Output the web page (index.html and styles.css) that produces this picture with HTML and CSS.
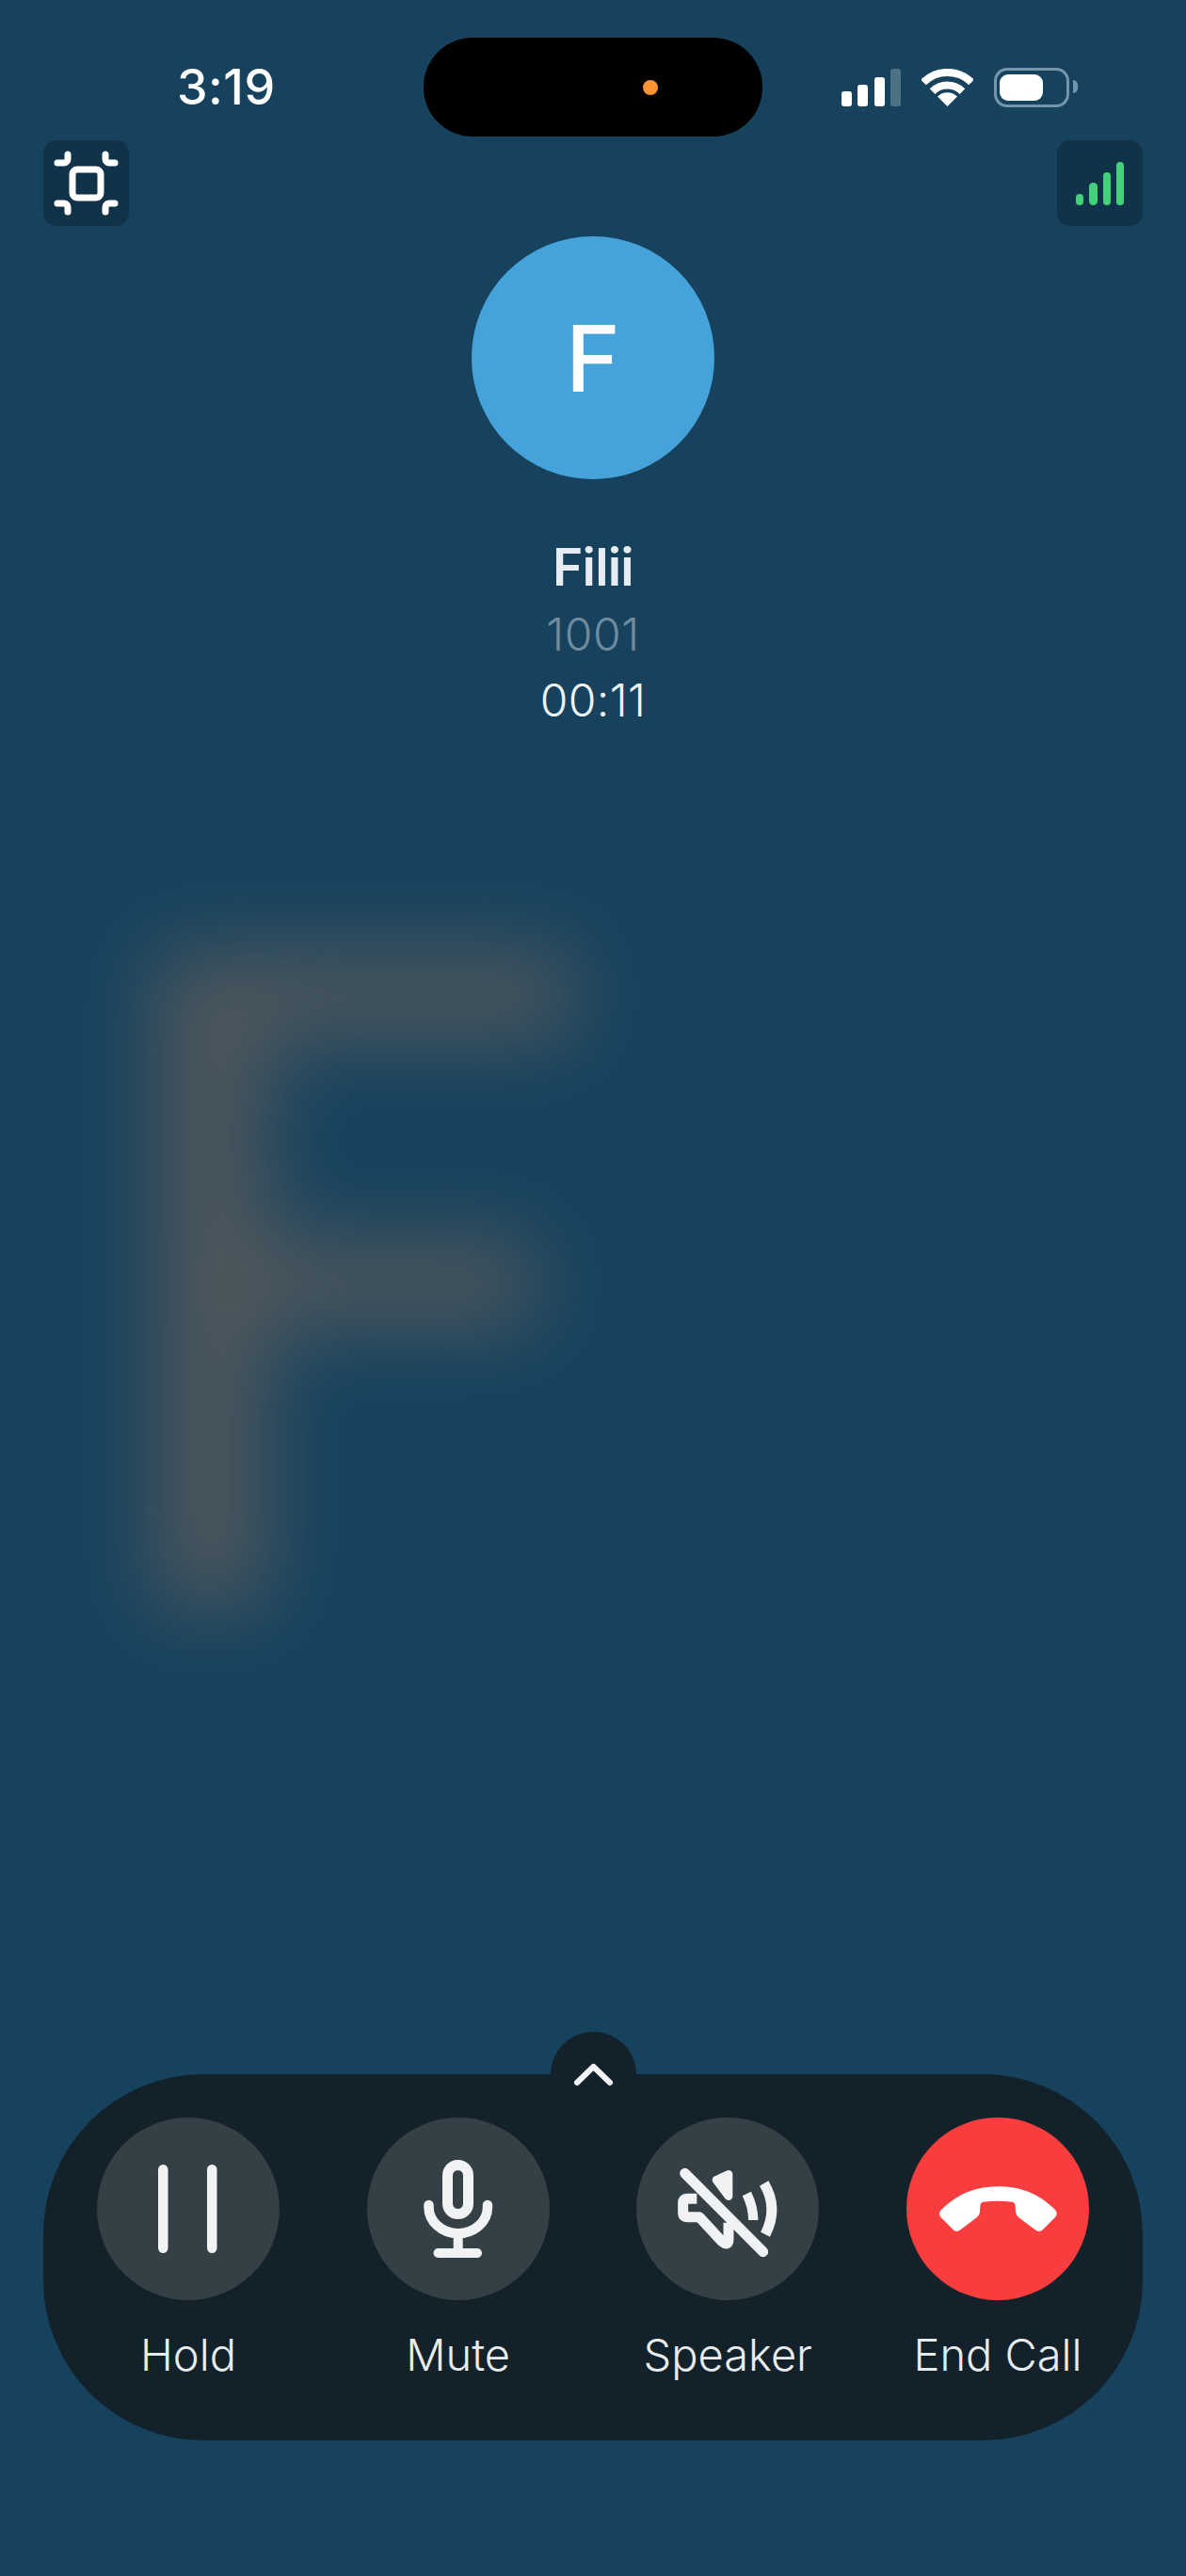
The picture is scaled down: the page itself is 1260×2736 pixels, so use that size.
FILE: index.html
```html
<!DOCTYPE html>
<html lang="en">
<head>
	<meta charset="UTF-8">
	<title>Call</title>
	<link rel="stylesheet" href="styles.css">
</head>
<body>
<div class="screen">
	<div class="bg-letter">F</div>

	<div class="status">
		<div class="time">3:19</div>
		<div class="island"><span class="island-dot"></span></div>
		<div class="status-icons">
			<div class="cell">
				<span class="cell-bar b1"></span>
				<span class="cell-bar b2"></span>
				<span class="cell-bar b3"></span>
				<span class="cell-bar b4"></span>
			</div>
			<svg class="wifi" width="55" height="40" viewBox="0 0 55 40" fill="none" stroke="#fff">
				<path stroke-width="8" d="M2 14.5A36 36 0 0 1 53 14.5"/>
				<path stroke-width="8" d="M11.600 24.100A22.500 22.500 0 0 1 43.400 24.100"/>
				<path fill="#fff" stroke="none" d="M27.500 40L17 29.500A14.800 14.800 0 0 1 38 29.500Z"/>
			</svg>
			<div class="battery"><span class="battery-fill"></span></div>
			<span class="battery-nub"></span>
		</div>
	</div>

	<div class="toolbar">
		<div class="tool">
			<svg width="91" height="91" viewBox="0 0 91 91" fill="none" stroke="#fff" stroke-width="7" stroke-linecap="round">
				<rect x="31" y="31" width="30" height="30" rx="5"/>
				<path d="M26 15V20a4 4 0 0 1-4 4H15"/>
				<path d="M66 15V20a4 4 0 0 0 4 4H76"/>
				<path d="M15 67H22a4 4 0 0 1 4 4V76"/>
				<path d="M76 67H70a4 4 0 0 0-4 4V76"/>
			</svg>
		</div>
		<div class="tool tool-signal">
			<span class="sig s1"></span>
			<span class="sig s2"></span>
			<span class="sig s3"></span>
			<span class="sig s4"></span>
		</div>
	</div>

	<div class="caller">
		<div class="avatar">F</div>
		<div class="name">Filii</div>
		<div class="number">1001</div>
		<div class="timer">00:11</div>
	</div>

	<div class="panel">
		<div class="more">
			<svg width="91" height="91" viewBox="0 0 91 91" fill="none" stroke="#f2f4f6" stroke-width="6" stroke-linecap="round" stroke-linejoin="round">
				<path d="M28 54L45.500 37L63 54"/>
			</svg>
		</div>
		<div class="action">
			<div class="round">
				<svg width="194" height="194" viewBox="0 0 194 194" fill="#f0f2f4">
					<rect x="65" y="50" width="10.500" height="94" rx="5.200"/>
					<rect x="117" y="50" width="10.500" height="94" rx="5.200"/>
				</svg>
			</div>
			<div class="label">Hold</div>
		</div>
		<div class="action">
			<div class="round">
				<svg width="194" height="194" viewBox="0 0 194 194" fill="none" stroke="#f0f2f4" stroke-linecap="round">
					<rect x="85.500" y="50.500" width="22" height="52" rx="11" stroke-width="11"/>
					<path stroke-width="10.500" d="M65.500 93v2a31 28 0 0 0 62.500 0v-2"/>
					<path stroke-width="10" stroke-linecap="butt" d="M96.700 123V144"/>
					<path stroke-width="10" d="M75.500 144H117"/>
				</svg>
			</div>
			<div class="label">Mute</div>
		</div>
		<div class="action">
			<div class="round">
				<svg width="194" height="194" viewBox="51 27 582 582" fill="none" stroke="#f0f2f4" stroke-width="33" stroke-linejoin="round">
					<path d="M244 286H212Q200 286 200 298V332Q200 344 212 344H252L322 420Q345 440 345 414V362"/>
					<path stroke-width="26" fill="#f0f2f4" d="M306 226L345 208V278Z"/>
					<path stroke-linecap="round" d="M206 205L455 455"/>
					<path stroke-width="31" d="M403 270Q423 310 424 354"/>
					<path stroke-width="33" d="M458 237C490 290 490 345 462 400"/>
				</svg>
			</div>
			<div class="label">Speaker</div>
		</div>
		<div class="action">
			<div class="round round-end">
				<svg width="194" height="194" viewBox="0 0 194 194" fill="#fff">
					<path d="M37 98C55 80 75 73.300 97.500 73.300C120 73.300 140 80 158 98Q161.500 102 158 106L145 119Q141.500 122.500 137 119.500L119 106Q116 103.500 116 100L115.500 93Q115 90 112 89.800Q97 87.500 82 89.800Q79 90 78.500 93L78 100Q78 103.500 75 106L57 119.500Q53 122.500 49.500 119L36.500 106Q33 102 37 98Z"/>
				</svg>
			</div>
			<div class="label">End Call</div>
		</div>
	</div>
</div>
</body>
</html>
```

FILE: styles.css
```css
html,body{
	margin: 0;
	padding: 0;
	background-color: #16425e;
}
.screen{
	position: relative;
	display: flex;
	flex-direction: column;
	width: 1260px;
	height: 2736px;
	overflow: hidden;
	background-color: #16425e;
	font-family: Inter, "Liberation Sans", sans-serif;
	color: #fff;
}
.bg-letter{
	position: absolute;
	top: 880px;
	left: 92px;
	font-family: Roboto, sans-serif;
	font-size: 985px;
	font-weight: 500;
	line-height: 1;
	color: #967259;
	opacity: .45;
	filter: blur(46px);
}

/* status bar */
.status{
	position: relative;
	display: grid;
	grid-template-columns: 450px 360px 450px;
	height: 105px;
	margin-top: 40px;
}
.time{
	align-self: center;
	padding-left: 188px;
	font-size: 52px;
	font-weight: 500;
	line-height: 60px;
	letter-spacing: .5px;
}
.island{
	display: flex;
	align-items: center;
	justify-content: flex-end;
	padding-right: 111px;
	background-color: #000;
	border-radius: 52px;
}
.island-dot{
	width: 16px;
	height: 16px;
	margin-top: 1px;
	background-color: #ff9430;
	border-radius: 50%;
}
.status-icons{
	display: flex;
	align-items: flex-end;
	height: 73px;
	padding-left: 84px;
}
.cell{
	display: flex;
	align-items: flex-end;
	gap: 6.300px;
	margin-right: 22px;
}
.cell-bar{
	width: 11px;
	background-color: #fff;
	border-radius: 3px;
}
.b1{height: 16px;}
.b2{height: 23px;}
.b3{height: 31px;}
.b4{height: 40px; background-color: #4f7186;}
.wifi{
	margin-right: 22px;
}
.battery{
	box-sizing: border-box;
	width: 80px;
	height: 42px;
	margin-bottom: -1px;
	padding: 4px 3px;
	border: 3px solid #7496ac;
	border-radius: 14px;
}
.battery-fill{
	display: block;
	width: 46px;
	height: 28px;
	background-color: #fff;
	border-radius: 9px;
}
.battery-nub{
	width: 5px;
	height: 14px;
	margin: 0 0 14px 4px;
	background-color: #7496ac;
	border-radius: 0 5px 5px 0;
}

/* corner tools */
.toolbar{
	display: flex;
	justify-content: space-between;
	margin-top: 4px;
	padding: 0 46px;
}
.tool{
	width: 91px;
	height: 91px;
	background-color: #113349;
	border-radius: 14px;
}
.tool-signal{
	display: flex;
	align-items: flex-end;
	box-sizing: border-box;
	gap: 6px;
	padding: 0 20px 22px;
}
.sig{
	width: 8.500px;
	background-color: #43d27a;
	border-radius: 5px;
}
.s1{height: 12px;}
.s2{height: 24px;}
.s3{height: 35px;}
.s4{height: 46px;}

/* caller */
.caller{
	position: relative;
	display: flex;
	flex-direction: column;
	align-items: center;
	margin-top: 11px;
}
.avatar{
	display: flex;
	align-items: center;
	justify-content: center;
	width: 258px;
	height: 258px;
	font-size: 98px;
	font-weight: 500;
	background-color: #45a3da;
	border-radius: 50%;
}
.name{
	margin-top: 60px;
	font-size: 55px;
	font-weight: 600;
	line-height: 66px;
	letter-spacing: -.8px;
	color: #e6ecf1;
}
.number{
	margin-top: 8px;
	font-size: 48px;
	font-weight: 300;
	line-height: 62px;
	letter-spacing: .6px;
	color: #6f8ba0;
}
.timer{
	margin-top: 8px;
	font-size: 48px;
	font-weight: 300;
	line-height: 62px;
	letter-spacing: .4px;
	color: #eef3f6;
}

/* bottom panel */
.panel{
	position: relative;
	display: grid;
	grid-template-columns: repeat(4, 240px);
	justify-content: space-between;
	box-sizing: border-box;
	height: 389px;
	margin: auto 46px 144px;
	padding: 46px 34px 0;
	background-color: #13222a;
	border-radius: 170px;
}
.more{
	position: absolute;
	top: -45px;
	left: 539px;
	width: 91px;
	height: 91px;
	background-color: #13222a;
	border-radius: 50%;
}
.action{
	display: flex;
	flex-direction: column;
	align-items: center;
}
.round{
	width: 194px;
	height: 194px;
	background-color: #343f46;
	border-radius: 50%;
}
.round-end{
	background-color: #f93c3e;
}
.round svg{
	display: block;
}
.label{
	margin-top: 28px;
	font-size: 47px;
	font-weight: 300;
	line-height: 60px;
	color: #e8ecef;
}
```
